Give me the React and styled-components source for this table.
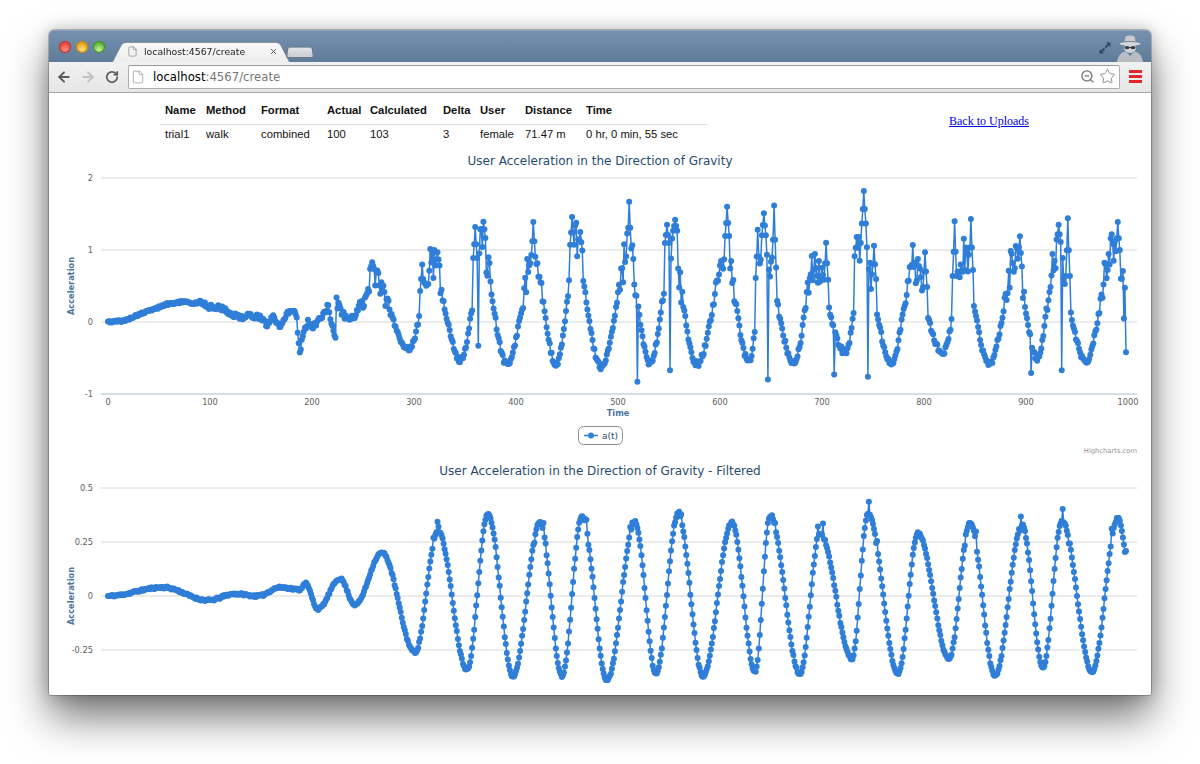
import React from 'react';
import styled, { createGlobalStyle } from 'styled-components';
import { ArrowLeft, ArrowRight, RotateCw, File, X, Star, ZoomOut } from 'lucide-react';

const GlobalStyle = createGlobalStyle`
  html, body { margin: 0; padding: 0; background: #fff; }
  body { width: 1200px; height: 764px; overflow: hidden; font-family: "Liberation Sans", Arial, sans-serif; }
`;

// ---------- data ----------
const mulberry32 = (a) => () => {
  a |= 0; a = (a + 0x6d2b79f5) | 0;
  let t = Math.imul(a ^ (a >>> 15), 1 | a);
  t = (t + Math.imul(t ^ (t >>> 7), 61 | t)) ^ t;
  return ((t ^ (t >>> 14)) >>> 0) / 4294967296;
};

const px2d = (px) => (px - 108) / 1.02;

const interp = (pts, d, smooth) => {
  if (d <= pts[0][0]) return pts[0][1];
  for (let i = 1; i < pts.length; i++) {
    const [d1, v1] = pts[i];
    if (d <= d1) {
      const [d0, v0] = pts[i - 1];
      let t = (d - d0) / (d1 - d0);
      if (smooth) t = (1 - Math.cos(Math.PI * t)) / 2;
      return v0 + (v1 - v0) * t;
    }
  }
  return pts[pts.length - 1][1];
};

// extrema of the filtered signal, in page x
const FILTER_PTS = [
  [108, 0], [163, 0.04], [208, -0.02], [235, 0.01], [258, 0.0], [280, 0.04], [300, 0.03], [305, 0.06],
  [318, -0.06], [340, 0.08], [355, -0.04], [382, 0.2], [415, -0.26], [438, 0.3], [467, -0.34], [488, 0.38],
  [513, -0.37], [540, 0.34], [562, -0.37], [582, 0.37], [607, -0.39], [635, 0.34], [656, -0.36], [678, 0.38],
  [703, -0.37], [732, 0.34], [755, -0.35], [770, 0.37], [800, -0.36], [820, 0.29], [852, -0.29], [868, 0.38],
  [898, -0.36], [918, 0.29], [949, -0.29], [970, 0.34], [995, -0.37], [1022, 0.33], [1043, -0.33], [1062, 0.35],
  [1092, -0.35], [1118, 0.36], [1127, 0.2],
].map(([p, v]) => [px2d(p), v]);

const HUMP = [
  [108, 0], [125, 0.02], [133, 0.07], [150, 0.16], [160, 0.21], [167, 0.25], [183, 0.28], [193, 0.26],
  [202, 0.28], [207, 0.21], [216, 0.21], [223, 0.19], [233, 0.09], [243, 0.07], [250, 0.09], [260, 0.07],
  [267, -0.05], [273, 0.09], [280, -0.09], [287, 0.14], [295, 0.16], [297, 0.05], [298, -0.23], [300, -0.44],
  [303, -0.15], [308, 0], [313, -0.07], [320, 0.05], [325, 0.12], [328, 0.26], [332, -0.07], [336, -0.22],
].map(([p, v]) => [px2d(p), v]);

const RAW_SPIKES = [
  [372, 0.83, 'p'], [382, 0.44, 'p'], [422, 0.8, 'p'], [437, 0.97, 'p'], [475, 1.32, 'p'], [478, -0.33, 'x'],
  [482, 1.04, 'p'], [533, 1.39, 'p'], [572, 1.46, 'p'], [580, 1.25, 'p'], [629, 1.67, 'p'], [637, -0.83, 'x'],
  [667, 1.35, 'p'], [670, -0.67, 'x'], [675, 1.42, 'p'], [727, 1.6, 'p'], [758, 1.28, 'p'], [764, 1.51, 'p'],
  [768, -0.8, 'x'], [774, 1.62, 'p'], [826, 1.1, 'p'], [834, -0.73, 'x'], [857, 1.18, 'p'], [864, 1.82, 'p'],
  [868, -0.76, 'x'], [874, 1.06, 'p'], [925, 0.97, 'p'], [955, 1.4, 'p'], [971, 1.43, 'p'], [1020, 1.19, 'p'],
  [1031, -0.71, 'x'], [1059, 1.35, 'p'], [1062, -0.67, 'x'], [1068, 1.44, 'p'], [1118, 1.39, 'p'],
  [1120, 1.0, 'x'], [1122, 0.6, 'x'], [1124, 0.05, 'x'], [1126, -0.42, 'x'],
];

const N = 999;

const buildFiltered = () => {
  const rnd = mulberry32(11);
  const out = [];
  for (let i = 0; i < N; i++) {
    let v = interp(FILTER_PTS, i, true);
    v += (rnd() - 0.5) * 0.01;
    if (v > 0.22 && rnd() < 0.15) v += (rnd() - 0.3) * 0.08;
    out.push(v);
  }
  return out;
};

const buildRaw = () => {
  const rnd = mulberry32(5);
  const out = [];
  const humpEnd = px2d(336);
  for (let i = 0; i < N; i++) {
    let v;
    if (i <= humpEnd) {
      v = interp(HUMP, i, false) + (rnd() - 0.5) * (i < 90 ? 0.03 : 0.07);
    } else {
      const f = interp(FILTER_PTS, i + 6, true);
      v = 0.12 + 1.9 * f + 1.2 * Math.max(0, f - 0.15);
      const amp = 0.04 + 0.75 * Math.max(0, f);
      v += (rnd() - 0.5) * amp * 2;
    }
    out.push(v);
  }
  RAW_SPIKES.forEach(([p, v, kind]) => {
    const idx = Math.round(px2d(p));
    if (idx < 0 || idx >= N) return;
    const b = out[idx];
    out[idx] = v;
    if (kind !== 'p') return;
    [-1, 1].forEach((s) => {
      if (out[idx + s] !== undefined) out[idx + s] = Math.max(out[idx + s], b + (v - b) * 0.6);
      if (out[idx + 2 * s] !== undefined) out[idx + 2 * s] = Math.max(out[idx + 2 * s], b + (v - b) * 0.28);
    });
  });
  return out;
};

const RAW = buildRaw();
const FILTERED = buildFiltered();

// ---------- window chrome ----------
const Stage = styled.div`
  width: 1200px;
  height: 764px;
  box-sizing: border-box;
  padding: 30px 49px 0;
`;

const Window = styled.div`
  width: 1102px;
  height: 665px;
  display: flex;
  flex-direction: column;
  overflow: hidden;
  background: #fff;
  border-radius: 5px 5px 2px 2px;
  box-shadow: 0 22px 42px rgba(0, 0, 0, 0.55), 0 0 16px rgba(0, 0, 0, 0.22), 0 0 0 1px rgba(0, 0, 0, 0.2);
`;

const TitleBar = styled.div`
  height: 32px;
  flex-shrink: 0;
  display: flex;
  align-items: flex-end;
  padding: 0 6px 0 10px;
  background: linear-gradient(#7591ae, #5e7b9a);
  border-top: 1px solid #8aa3bd;
  box-sizing: border-box;
`;

const Lights = styled.div`
  align-self: flex-start;
  margin-top: 10px;
  display: flex;
  gap: 5px;
`;

const Light = styled.span`
  width: 12px;
  height: 12px;
  border-radius: 50%;
  background: radial-gradient(circle at 50% 75%, ${(p) => p.$hi} 0%, ${(p) => p.$c} 65%);
  box-shadow: inset 0 0 0 1px ${(p) => p.$edge};
`;

const Tab = styled.div`
  position: relative;
  isolation: isolate;
  width: 178px;
  height: 23px;
  margin-left: 7px;
  padding: 2px 12px 0 15px;
  box-sizing: border-box;
  display: flex;
  align-items: center;
  gap: 6px;
  font: 9.3px "DejaVu Sans", Verdana, sans-serif;
  color: #222;

  &::before {
    content: '';
    position: absolute;
    inset: 0;
    z-index: -1;
    background: linear-gradient(#f8f8f8, #eeeeee);
    border: 1px solid rgba(35, 50, 70, 0.55);
    border-bottom: none;
    border-radius: 5px 5px 0 0;
    transform: perspective(30px) rotateX(10deg);
    transform-origin: bottom;
  }
`;

const TabTitle = styled.span`
  flex: 1;
  white-space: nowrap;
`;

const NewTab = styled.div`
  position: relative;
  isolation: isolate;
  align-self: flex-start;
  margin: 14px 0 0 -4px;
  width: 28px;
  height: 13px;

  &::before {
    content: '';
    position: absolute;
    inset: 0;
    z-index: -1;
    background: linear-gradient(#e2e4e7, #c9ced4);
    border: 1px solid rgba(35, 50, 70, 0.6);
    border-radius: 3px 3px 2px 2px;
    transform: perspective(20px) rotateX(12deg);
    transform-origin: bottom;
  }
`;

const TitleRight = styled.div`
  margin-left: auto;
  display: flex;
  align-items: flex-end;
  gap: 3px;
`;

const ExpandBox = styled.div`
  align-self: flex-start;
  margin-top: 8px;
  display: flex;
`;

const Toolbar = styled.div`
  height: 31px;
  flex-shrink: 0;
  box-sizing: border-box;
  display: flex;
  align-items: center;
  padding: 0 0 1px 3px;
  background: linear-gradient(#f1f1f1, #e6e6e6);
  border-bottom: 1px solid #a6a6a6;
`;

const NavButton = styled.div`
  width: 24px;
  height: 24px;
  display: flex;
  align-items: center;
  justify-content: center;
  color: ${(p) => (p.$off ? '#c2c2c2' : '#5c5c5c')};
`;

const Omnibox = styled.div`
  flex: 1;
  height: 24px;
  margin-left: 4px;
  box-sizing: border-box;
  display: flex;
  align-items: center;
  padding: 0 3px 0 2px;
  background: #fff;
  border: 1px solid #aeaeae;
  border-top-color: #9a9a9a;
  border-radius: 2px;
`;

const PageIcon = styled.span`
  width: 14px;
  display: flex;
  justify-content: center;
  color: #a0a0a0;
`;

const Url = styled.span`
  flex: 1;
  margin-left: 8px;
  font: 11.7px "DejaVu Sans", Verdana, sans-serif;
  color: #000;
  white-space: nowrap;
`;

const UrlRest = styled.span`
  color: #777;
`;

const OmniIcons = styled.span`
  display: flex;
  align-items: center;
  gap: 4px;
  color: #7a7a7a;
`;

const MenuButton = styled.div`
  width: 31px;
  display: flex;
  flex-direction: column;
  align-items: center;
  gap: 2px;
`;

const MenuBar = styled.span`
  width: 13px;
  height: 3px;
  background: #e3262b;
`;

// ---------- page ----------
const Content = styled.div`
  flex: 1;
  overflow: hidden;
  background: #fff;
  display: flex;
  flex-direction: column;
`;

const Header = styled.div`
  height: 54px;
  flex-shrink: 0;
  box-sizing: border-box;
  display: flex;
  align-items: flex-start;
  justify-content: space-between;
  padding: 6px 122px 0 111px;
`;

const Table = styled.table`
  border-collapse: collapse;
  table-layout: fixed;
  width: 548px;
  font: 11.25px "Liberation Sans", Arial, sans-serif;
  color: #111;
`;

const Th = styled.th`
  width: ${(p) => p.$w - 10}px;
  text-align: left;
  font-weight: bold;
  line-height: 14px;
  padding: 4px 5px 7px;
  border-bottom: 1px solid #dedede;
  white-space: nowrap;
`;

const Td = styled.td`
  line-height: 14px;
  padding: 2px 5px 4px;
  white-space: nowrap;
`;

const BackLink = styled.a`
  margin-top: 15px;
  font: 12px/14px "Liberation Serif", "Times New Roman", serif;
  color: #0000ee;
  text-decoration: underline;
`;

const ChartBox = styled.div`
  height: 310px;
  flex-shrink: 0;
`;

const ChartTitle = styled.text`
  font: 12px "DejaVu Sans", Verdana, sans-serif;
  fill: #274b6d;
`;

const AxisLabel = styled.text`
  font: 8.25px "DejaVu Sans", Verdana, sans-serif;
  fill: #606060;
`;

const AxisTitle = styled.text`
  font: bold 8.25px "DejaVu Sans", Verdana, sans-serif;
  fill: #4d759e;
`;

const LegendText = styled.text`
  font: 9px "DejaVu Sans", Verdana, sans-serif;
  fill: #274b6d;
`;

const Credits = styled.text`
  font: 6.75px "DejaVu Sans", Verdana, sans-serif;
  fill: #909090;
`;

const SERIES = '#2f7ed8';
const PLOT_TOP = 31;
const PLOT_H = 216;
const PLOT_L = 52;
const PLOT_R = 1088;
const X0 = 59;
const XK = 1.02;

const Chart = ({ title, ticks, yMin, yMax, data, legend, xAxis }) => {
  const sy = (v) => PLOT_TOP + ((yMax - v) / (yMax - yMin)) * PLOT_H;
  const sx = (d) => X0 + d * XK;
  const pts = data.map((v, i) => [sx(i), sy(v)]);
  const path = pts.map(([x, y], i) => `${i ? 'L' : 'M'}${x.toFixed(1)} ${y.toFixed(1)}`).join('');
  const bottom = PLOT_TOP + PLOT_H;
  return (
    <ChartBox>
      <svg width="1102" height="310" viewBox="0 0 1102 310">
        <ChartTitle x="551" y="18" textAnchor="middle">{title}</ChartTitle>
        {ticks.map(([v, label]) => (
          <g key={label}>
            <line x1={PLOT_L} x2={PLOT_R} y1={sy(v)} y2={sy(v)} stroke="#d8d8d8" strokeWidth="1" />
            <AxisLabel x="44" y={sy(v) + 3} textAnchor="end">{label}</AxisLabel>
          </g>
        ))}
        <line x1={PLOT_L} x2={PLOT_R} y1={bottom} y2={bottom} stroke="#c0d0e0" strokeWidth="1" />
        {xAxis && Array.from({ length: 11 }, (_, k) => (
          <AxisLabel key={k} x={sx(k * 100)} y={bottom + 11} textAnchor="middle">{k * 100}</AxisLabel>
        ))}
        {xAxis && <AxisTitle x="569" y={bottom + 22} textAnchor="middle">Time</AxisTitle>}
        <AxisTitle x="25" y={PLOT_TOP + PLOT_H / 2} textAnchor="middle" transform={`rotate(-90 25 ${PLOT_TOP + PLOT_H / 2})`}>
          Acceleration
        </AxisTitle>
        <path d={path} fill="none" stroke={SERIES} strokeWidth="1.5" strokeLinejoin="round" />
        {pts.map(([x, y], i) => (
          <circle key={i} cx={x.toFixed(1)} cy={y.toFixed(1)} r="3" fill={SERIES} />
        ))}
        {legend && (
          <g>
            <rect x="529.5" y="279.5" width="44" height="18" rx="5" fill="#fff" stroke="#909090" />
            <line x1="535" x2="549" y1="288.5" y2="288.5" stroke={SERIES} strokeWidth="1.5" />
            <circle cx="542" cy="288.5" r="3" fill={SERIES} />
            <LegendText x="553" y="291.5">{legend}</LegendText>
            <Credits x="1088" y="306" textAnchor="end">Highcharts.com</Credits>
          </g>
        )}
      </svg>
    </ChartBox>
  );
};

const ExpandIcon = () => (
  <svg width="14" height="14" viewBox="0 0 14 14">
    <line x1="7.5" y1="6.5" x2="11" y2="3" stroke="#2c4763" strokeWidth="1.8" />
    <polygon points="8,1.5 12.5,1.5 12.5,6" fill="#2c4763" />
    <line x1="6.5" y1="7.5" x2="3" y2="11" stroke="#2c4763" strokeWidth="1.8" />
    <polygon points="1.5,8 1.5,12.5 6,12.5" fill="#2c4763" />
  </svg>
);

const IncognitoIcon = () => (
  <svg width="30" height="29" viewBox="0 0 30 29">
    <path d="M2 29 C3 21.5 7 19 11 18.5 L15 23 L19 18.5 C23 19 27 21.5 28 29 Z" fill="#b9bcc0" />
    <ellipse cx="15" cy="15" rx="6" ry="5" fill="#cfd1d4" />
    <ellipse cx="12" cy="14.6" rx="2.6" ry="1.7" fill="#3b3d40" />
    <ellipse cx="18" cy="14.6" rx="2.6" ry="1.7" fill="#3b3d40" />
    <rect x="13" y="14" width="4" height="0.9" fill="#3b3d40" />
    <path d="M9 10.5 L10.5 3.5 Q15 1.5 19.5 3.5 L21 10.5 Z" fill="#c9cbce" />
    <path d="M9.6 8 L20.4 8 L21 10.5 L9 10.5 Z" fill="#85898e" />
    <ellipse cx="15" cy="10.8" rx="10.5" ry="1.8" fill="#d6d8db" />
  </svg>
);

const COLS = [
  ['Name', 41, 'trial1'],
  ['Method', 55, 'walk'],
  ['Format', 66, 'combined'],
  ['Actual', 43, '100'],
  ['Calculated', 73, '103'],
  ['Delta', 37, '3'],
  ['User', 45, 'female'],
  ['Distance', 61, '71.47 m'],
  ['Time', 127, '0 hr, 0 min, 55 sec'],
];

export default function App() {
  return (
    <Stage>
      <GlobalStyle />
      <Window>
        <TitleBar>
          <Lights>
            <Light $c="#e2463f" $hi="#ff8f80" $edge="#b5362f" />
            <Light $c="#e6a21e" $hi="#ffe07a" $edge="#b8811a" />
            <Light $c="#5db834" $hi="#c6f29a" $edge="#3f8a22" />
          </Lights>
          <Tab>
            <File size={11} color="#8a8a8a" strokeWidth={1.6} />
            <TabTitle>localhost:4567/create</TabTitle>
            <X size={9} color="#555" strokeWidth={2.4} />
          </Tab>
          <NewTab />
          <TitleRight>
            <ExpandBox><ExpandIcon /></ExpandBox>
            <IncognitoIcon />
          </TitleRight>
        </TitleBar>
        <Toolbar>
          <NavButton><ArrowLeft size={16} strokeWidth={3} /></NavButton>
          <NavButton $off><ArrowRight size={16} strokeWidth={3} /></NavButton>
          <NavButton><RotateCw size={14} strokeWidth={3} /></NavButton>
          <Omnibox>
            <PageIcon><File size={14} strokeWidth={1.4} /></PageIcon>
            <Url>localhost<UrlRest>:4567/create</UrlRest></Url>
            <OmniIcons>
              <ZoomOut size={15} strokeWidth={2.2} />
              <Star size={17} strokeWidth={1.4} color="#8f8f8f" />
            </OmniIcons>
          </Omnibox>
          <MenuButton>
            <MenuBar />
            <MenuBar />
            <MenuBar />
          </MenuButton>
        </Toolbar>
        <Content>
          <Header>
            <Table>
              <thead>
                <tr>{COLS.map(([h, w]) => <Th key={h} $w={w}>{h}</Th>)}</tr>
              </thead>
              <tbody>
                <tr>{COLS.map(([h, , v]) => <Td key={h}>{v}</Td>)}</tr>
              </tbody>
            </Table>
            <BackLink href="#">Back to Uploads</BackLink>
          </Header>
          <Chart
            title="User Acceleration in the Direction of Gravity"
            ticks={[[2, '2'], [1, '1'], [0, '0'], [-1, '-1']]}
            yMin={-1}
            yMax={2}
            data={RAW}
            legend="a(t)"
            xAxis
          />
          <Chart
            title="User Acceleration in the Direction of Gravity - Filtered"
            ticks={[[0.5, '0.5'], [0.25, '0.25'], [0, '0'], [-0.25, '-0.25']]}
            yMin={-0.5}
            yMax={0.5}
            data={FILTERED}
          />
        </Content>
      </Window>
    </Stage>
  );
}
